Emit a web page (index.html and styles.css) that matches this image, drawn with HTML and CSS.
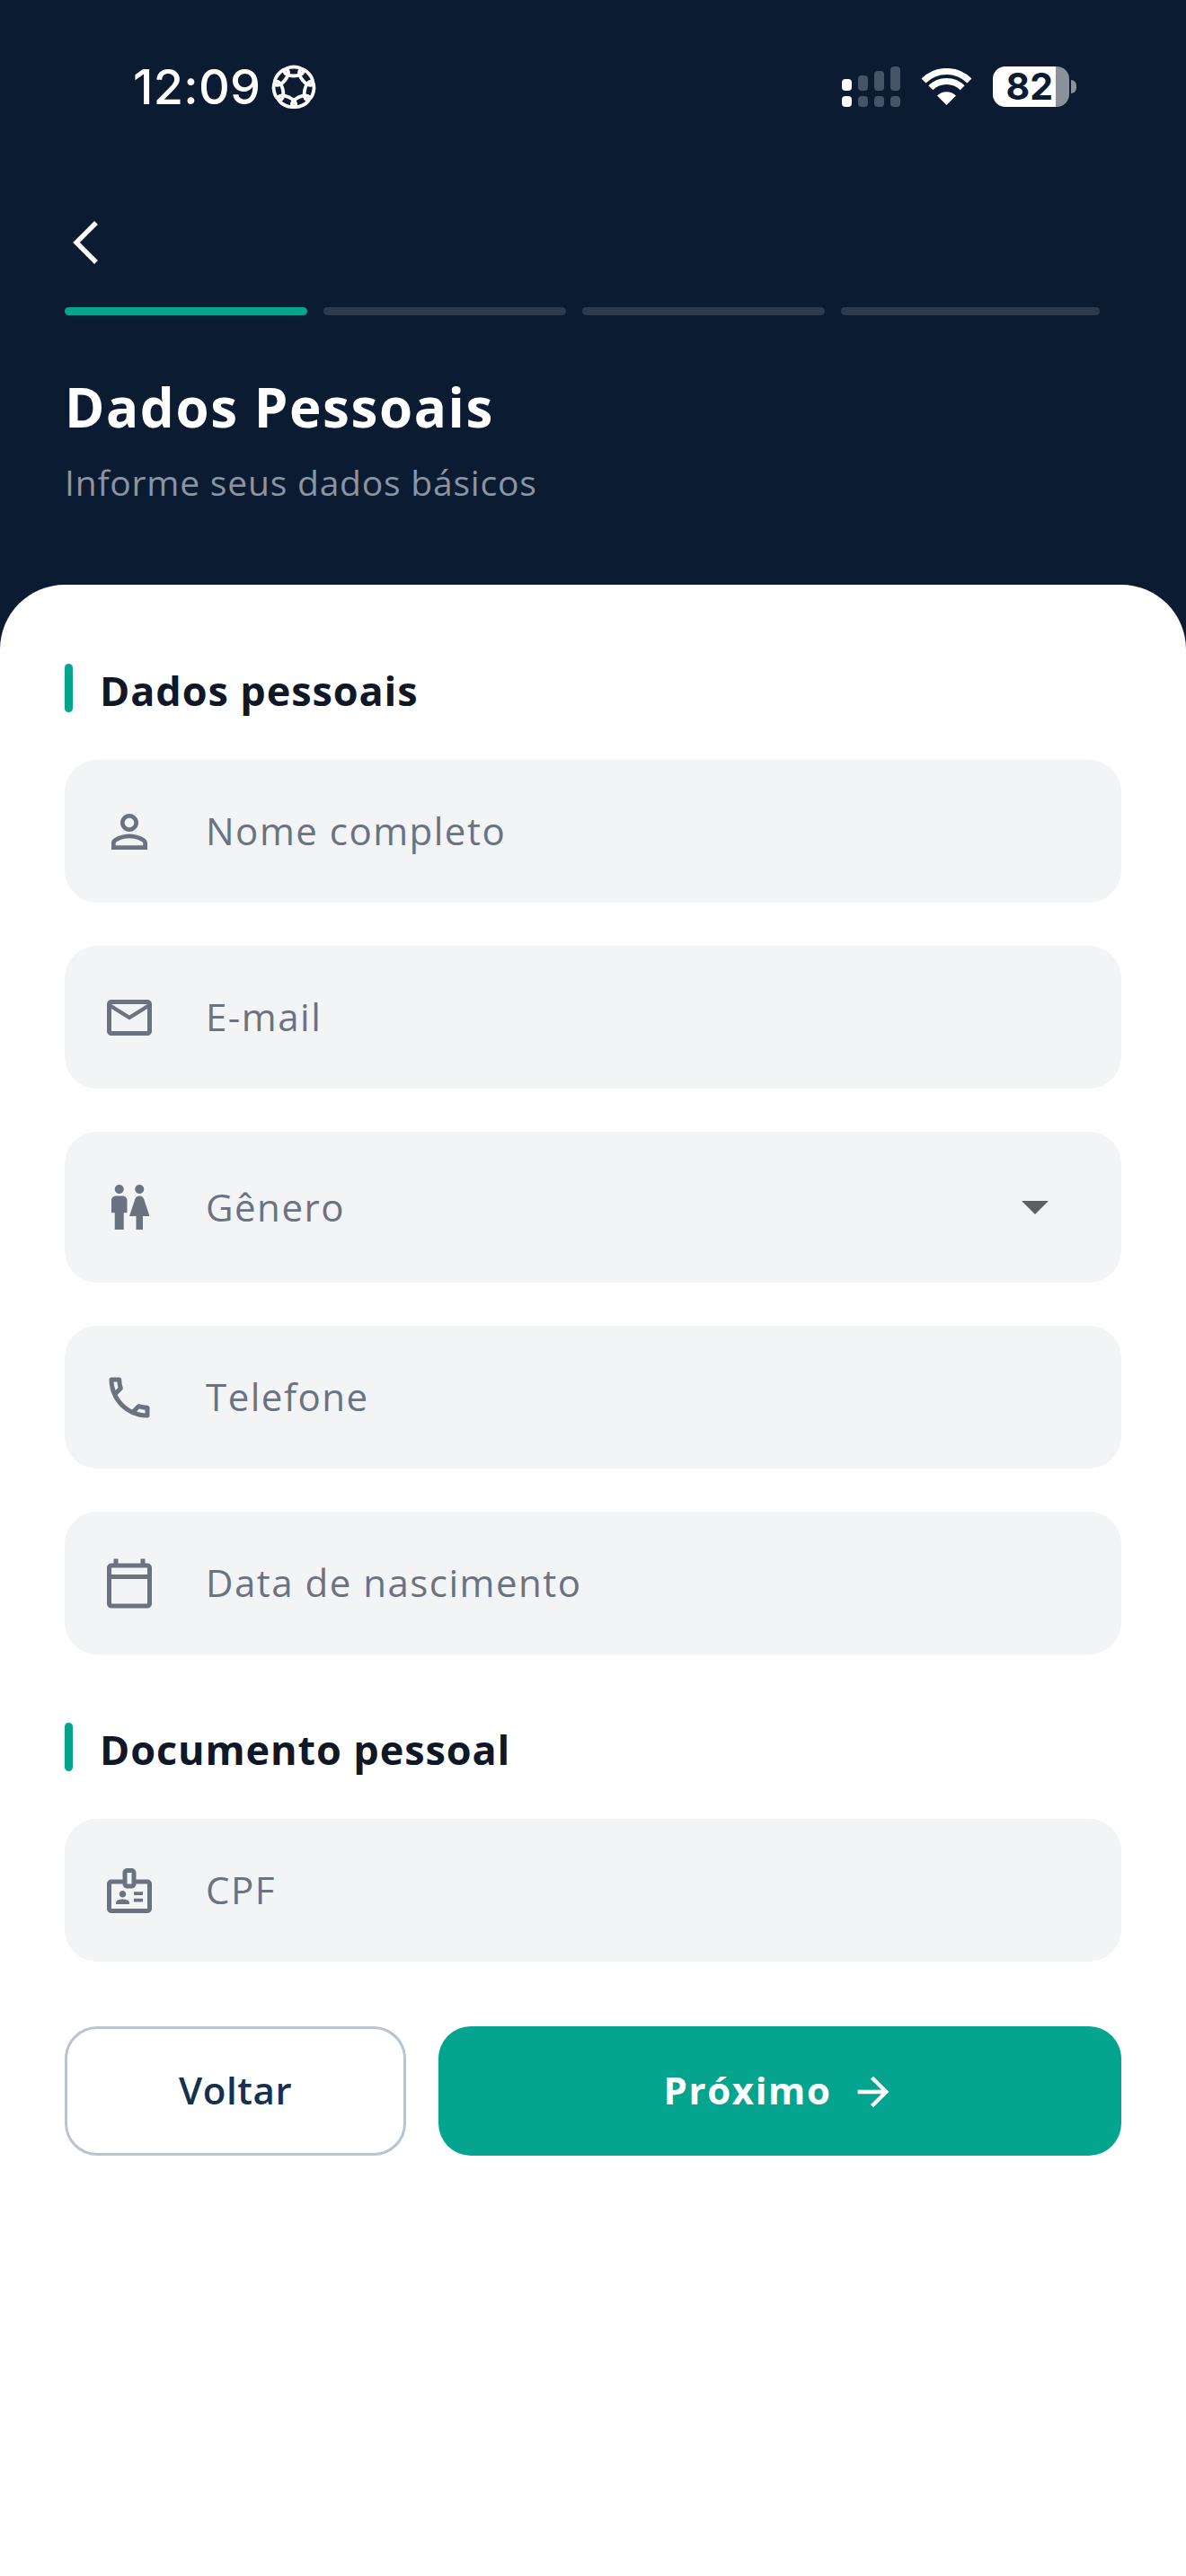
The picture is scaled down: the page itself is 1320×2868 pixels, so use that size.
FILE: index.html
```html
<!DOCTYPE html>
<html lang="pt-BR">
<head>
<meta charset="utf-8">
<title>Dados Pessoais</title>
<link rel="stylesheet" href="styles.css">
</head>
<body>
<div class="screen">
  <header class="hero">
    <div class="status">
      <div class="status-left">
        <span class="clock">12:09</span>
        <svg class="focus" viewBox="0 0 50 50" aria-hidden="true">
          <g fill="none" stroke="#fff" stroke-width="3.8">
            <ellipse cx="25" cy="7.5" rx="10.5" ry="5"/>
            <ellipse cx="25" cy="7.5" rx="10.5" ry="5" transform="rotate(51.43 25 25)"/>
            <ellipse cx="25" cy="7.5" rx="10.5" ry="5" transform="rotate(102.86 25 25)"/>
            <ellipse cx="25" cy="7.5" rx="10.5" ry="5" transform="rotate(154.29 25 25)"/>
            <ellipse cx="25" cy="7.5" rx="10.5" ry="5" transform="rotate(205.71 25 25)"/>
            <ellipse cx="25" cy="7.5" rx="10.5" ry="5" transform="rotate(257.14 25 25)"/>
            <ellipse cx="25" cy="7.5" rx="10.5" ry="5" transform="rotate(308.57 25 25)"/>
          </g>
        </svg>
      </div>
      <div class="status-right">
        <svg class="signal" viewBox="0 0 65 45" aria-hidden="true">
          <rect class="on" x="0" y="14" width="11" height="13" rx="4"/>
          <rect class="off" x="18" y="10" width="11" height="17" rx="4"/>
          <rect class="off" x="36" y="5" width="11" height="22" rx="4"/>
          <rect class="off" x="54" y="0" width="11" height="27" rx="4"/>
          <rect class="on" x="0" y="33" width="11" height="12" rx="4"/>
          <rect class="off" x="18" y="33" width="11" height="12" rx="4"/>
          <rect class="off" x="36" y="33" width="11" height="12" rx="4"/>
          <rect class="off" x="54" y="33" width="11" height="12" rx="4"/>
        </svg>
        <svg class="wifi" viewBox="0 0 57 41" aria-hidden="true">
          <path d="M3 14A36 36 0 0 1 54 14M10.8 21.8A25 25 0 0 1 46.2 21.8" fill="none" stroke="#fff" stroke-width="7"/>
          <path d="M28.5 41L18 30.5A15 15 0 0 1 39 30.5Z" fill="#fff"/>
        </svg>
        <div class="battery">
          <span class="battery-level">82</span>
          <span class="battery-cap"></span>
        </div>
      </div>
    </div>

    <button class="back" type="button" aria-label="Voltar">
      <svg viewBox="0 0 30 54" aria-hidden="true">
        <path d="M26 3L4 25L26 47" fill="none" stroke="#fff" stroke-width="5.4"/>
      </svg>
    </button>

    <div class="steps">
      <span class="step step-active"></span>
      <span class="step"></span>
      <span class="step"></span>
      <span class="step"></span>
    </div>

    <h1 class="title">Dados Pessoais</h1>
    <p class="subtitle">Informe seus dados básicos</p>
  </header>

  <main class="sheet">
    <h2 class="section">Dados pessoais</h2>
    <div class="fields">
      <label class="field">
        <svg class="icon" viewBox="0 0 24 24" aria-hidden="true"><path d="M12 5.9c1.16 0 2.1.94 2.1 2.1s-.94 2.1-2.1 2.1S9.9 9.16 9.9 8s.94-2.1 2.1-2.1m0 9c2.97 0 6.1 1.46 6.1 2.1v1.1H5.9V17c0-.64 3.13-2.1 6.1-2.1M12 4C9.79 4 8 5.79 8 8s1.79 4 4 4 4-1.79 4-4-1.79-4-4-4zm0 9c-2.67 0-8 1.34-8 4v3h16v-3c0-2.66-5.33-4-8-4z"/></svg>
        <span class="placeholder">Nome completo</span>
      </label>
      <label class="field">
        <svg class="icon" viewBox="0 0 24 24" aria-hidden="true"><path d="M20 4H4c-1.1 0-1.99.9-1.99 2L2 18c0 1.1.9 2 2 2h16c1.1 0 2-.9 2-2V6c0-1.1-.9-2-2-2zm0 14H4V8l8 5 8-5v10zm-8-7L4 6h16l-8 5z"/></svg>
        <span class="placeholder">E-mail</span>
      </label>
      <label class="field field-select">
        <svg class="icon" viewBox="0 0 24 24" aria-hidden="true"><path d="M5.5 22v-7.5H4V9c0-1.1.9-2 2-2h3c1.1 0 2 .9 2 2v5.5H9.5V22h-4zM18 22v-6h3l-2.54-7.63C18.18 7.55 17.42 7 16.56 7h-.12c-.86 0-1.63.55-1.9 1.37L12 16h3v6h3zM7.5 6c1.11 0 2-.89 2-2s-.89-2-2-2-2 .89-2 2 .89 2 2 2zm9 0c1.11 0 2-.89 2-2s-.89-2-2-2-2 .89-2 2 .89 2 2 2z"/></svg>
        <span class="placeholder">Gênero</span>
        <span class="caret"></span>
      </label>
      <label class="field">
        <svg class="icon" viewBox="0 0 24 24" aria-hidden="true"><path d="M6.54 5c.06.89.21 1.76.45 2.59l-1.2 1.2c-.41-1.2-.67-2.47-.76-3.79h1.51m9.86 12.02c.85.24 1.72.39 2.6.45v1.49c-1.32-.09-2.59-.35-3.8-.75l1.2-1.19M7.5 3H4c-.55 0-1 .45-1 1 0 9.39 7.61 17 17 17 .55 0 1-.45 1-1v-3.49c0-.55-.45-1-1-1-1.24 0-2.45-.2-3.57-.57-.1-.04-.21-.05-.31-.05-.26 0-.51.1-.71.29l-2.2 2.2c-2.83-1.45-5.15-3.76-6.59-6.59l2.2-2.2c.28-.28.36-.67.25-1.02C8.7 6.45 8.5 5.25 8.5 4c0-.55-.45-1-1-1z"/></svg>
        <span class="placeholder">Telefone</span>
      </label>
      <label class="field">
        <svg class="icon" viewBox="0 0 24 24" aria-hidden="true"><path d="M20 3h-1V1h-2v2H7V1H5v2H4c-1.1 0-2 .9-2 2v16c0 1.1.9 2 2 2h16c1.1 0 2-.9 2-2V5c0-1.1-.9-2-2-2zm0 2v3H4V5h16zM4 21V10h16v11H4z"/></svg>
        <span class="placeholder">Data de nascimento</span>
      </label>
    </div>

    <h2 class="section section-next">Documento pessoal</h2>
    <div class="fields">
      <label class="field">
        <svg class="icon" viewBox="0 0 24 24" aria-hidden="true"><path d="M20 7h-5V4c0-1.1-.9-2-2-2h-2c-1.1 0-2 .9-2 2v3H4c-1.1 0-2 .9-2 2v11c0 1.1.9 2 2 2h16c1.1 0 2-.9 2-2V9c0-1.1-.9-2-2-2zM11 4h2v5h-2V4zm9 16H4V9h5c0 1.1.9 2 2 2h2c1.1 0 2-.9 2-2h5v11zm-2-7.5h-4V14h4v-1.5zm0 3h-4V17h4v-1.5zM9 15c.83 0 1.5-.67 1.5-1.5S9.83 12 9 12s-1.5.67-1.5 1.5S8.17 15 9 15zm2.08 1.18c-.64-.28-1.34-.43-2.08-.43s-1.44.15-2.08.43c-.55.24-.92.78-.92 1.39V18h6v-.43c0-.61-.37-1.15-.92-1.39z"/></svg>
        <span class="placeholder">CPF</span>
      </label>
    </div>

    <div class="actions">
      <button class="btn btn-ghost" type="button">Voltar</button>
      <button class="btn btn-primary" type="button">
        Próximo
        <svg viewBox="0 0 24 24" aria-hidden="true"><path d="M12 4l-1.41 1.41L16.17 11H4v2h12.17l-5.58 5.59L12 20l8-8z"/></svg>
      </button>
    </div>
  </main>
</div>
</body>
</html>
```

FILE: styles.css
```css
* { box-sizing: border-box; }

html, body {
  margin: 0;
  padding: 0;
  background: #fff;
}

body {
  font-family: "Open Sans", "Liberation Sans", sans-serif;
}

.screen {
  width: 1320px;
  height: 2868px;
  display: flex;
  flex-direction: column;
  background: #fff;
  overflow: hidden;
}

/* Dark top area: status bar, back button, progress and title */
.hero {
  height: 723px;
  flex: none;
  padding: 73px 72px 0;
  background: #0b1b32;
  color: #fff;
}

.status {
  height: 47px;
  display: flex;
  align-items: center;
  justify-content: space-between;
}

.status-left {
  margin-left: 76px;
  display: flex;
  align-items: center;
  gap: 12px;
}

.clock {
  font-family: Inter, "Liberation Sans", sans-serif;
  font-size: 54px;
  font-weight: 500;
  line-height: 47px;
  letter-spacing: .3px;
}

.focus {
  width: 50px;
  height: 50px;
  display: block;
}

.status-right {
  margin-right: 50px;
  width: 261px;
  display: flex;
  align-items: center;
  gap: 23px;
}

.signal {
  width: 65px;
  height: 45px;
  display: block;
}

.signal .on { fill: #fff; }
.signal .off { fill: #465468; }

.wifi {
  width: 57px;
  height: 41px;
  display: block;
}

.battery {
  position: relative;
  width: 85px;
  height: 45px;
  padding-right: 18px;
  display: flex;
  align-items: center;
  justify-content: flex-end;
  border-radius: 14px;
  background: linear-gradient(90deg, #fff 82%, #8b929c 82%);
}

.battery-level {
  font-family: Inter, "Liberation Sans", sans-serif;
  font-size: 41px;
  font-weight: 700;
  line-height: 45px;
  color: #0b1b32;
}

.battery-cap {
  position: absolute;
  right: -8px;
  top: 15px;
  width: 6px;
  height: 15px;
  border-radius: 0 6px 6px 0;
  background: #8b929c;
}

.back {
  display: block;
  width: 30px;
  height: 54px;
  margin: 125px 0 0 9px;
  padding: 0;
  border: 0;
  background: none;
}

.back svg {
  display: block;
  width: 30px;
  height: 54px;
}

.steps {
  margin-top: 43px;
  width: 1152px;
  display: grid;
  grid-template-columns: 270px 270px 270px 1fr;
  gap: 18px;
}

.step {
  height: 9px;
  border-radius: 5px;
  background: #2e3b4e;
}

.step-active { background: #04a48f; }

.title {
  margin: 61px 0 0;
  font-size: 60px;
  font-weight: 700;
  line-height: 82px;
  letter-spacing: 1.6px;
}

.subtitle {
  margin: 16px 0 0;
  font-size: 39px;
  font-weight: 400;
  line-height: 53px;
  letter-spacing: .8px;
  color: #8b94a1;
}

/* White sheet overlapping the hero with rounded corners */
.sheet {
  flex: 1;
  position: relative;
  margin-top: -72px;
  padding: 88px 72px 0;
  border-radius: 72px 72px 0 0;
  background: #fff;
}

.section {
  height: 54px;
  margin: 0 0 53px;
  padding: 5px 0 0 39px;
  position: relative;
  display: flex;
  align-items: center;
  font-size: 45px;
  font-weight: 700;
  line-height: 54px;
  letter-spacing: .9px;
  color: #101828;
}

.section::before {
  content: "";
  position: absolute;
  left: 0;
  top: 0;
  width: 9px;
  height: 54px;
  border-radius: 5px;
  background: #04a48f;
}

.section-next { margin-top: 76px; }

.fields {
  display: flex;
  flex-direction: column;
  gap: 48px;
}

.field {
  height: 159px;
  padding: 0 42px;
  display: flex;
  align-items: center;
  border-radius: 36px;
  background: #f3f4f6;
}

.field-select { height: 168px; }

.icon {
  flex: none;
  width: 60px;
  height: 60px;
  display: block;
  fill: #6b7280;
}

.placeholder {
  margin-left: 55px;
  padding-bottom: 1px;
  font-size: 42px;
  font-weight: 400;
  line-height: 60px;
  letter-spacing: 1.5px;
  color: #6b7280;
}

.caret {
  width: 0;
  height: 0;
  margin-left: auto;
  margin-right: 39px;
  border-left: 15px solid transparent;
  border-right: 15px solid transparent;
  border-top: 15px solid #5f5f5f;
}

.actions {
  margin-top: 72px;
  display: flex;
  gap: 36px;
}

.btn {
  height: 144px;
  padding-bottom: 5px;
  display: flex;
  align-items: center;
  justify-content: center;
  border-radius: 36px;
  font-family: inherit;
  font-size: 42px;
  font-weight: 600;
  letter-spacing: .6px;
}

.btn-ghost {
  width: 380px;
  border: 3px solid #b8c4d0;
  background: #fff;
  color: #16304f;
}

.btn-primary {
  flex: 1;
  gap: 20px;
  border: 0;
  background: #04a48f;
  color: #fff;
  font-weight: 700;
  letter-spacing: 1.6px;
}

.btn-primary svg {
  width: 52px;
  height: 52px;
  margin-top: 5px;
  display: block;
  fill: #fff;
}
```
